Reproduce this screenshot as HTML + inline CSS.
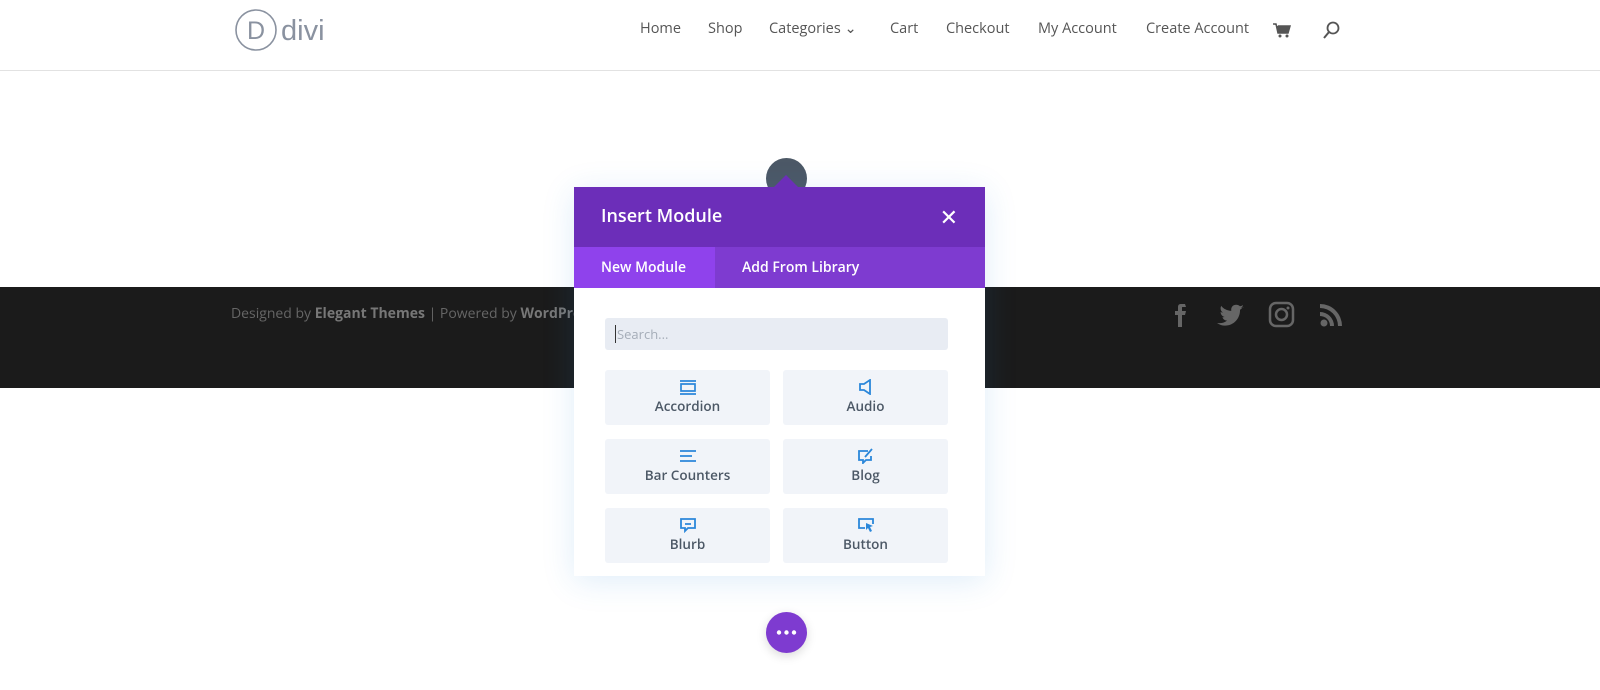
<!DOCTYPE html>
<html><head><meta charset="utf-8"><style>
*{margin:0;padding:0;box-sizing:border-box}
body{width:1600px;height:690px;background:#fff;position:relative;overflow:hidden;font-family:"Open Sans","Liberation Sans",sans-serif}
.hdr{position:absolute;left:0;top:0;width:1600px;height:71px;border-bottom:1px solid #e2e2e2;background:#fff}
.nav{position:absolute;top:19px;font-size:14.5px;color:#555}
.nav span{position:absolute;white-space:nowrap}
.foot{position:absolute;left:0;top:287px;width:1600px;height:101px;background:#1b1b1b}
.ft{position:absolute;left:231px;top:304px;font-size:14px;color:#666;white-space:nowrap}
.ft b{color:#777}
.modal{position:absolute;left:574px;top:187px;width:411px;height:389px;background:#fff;box-shadow:0 5px 30px rgba(43,135,218,.15)}
.mh{height:60px;background:#6c2eb9;color:#fff;font-size:18px;font-weight:600;padding:17px 0 0 27px;position:relative}
.tabs{height:41px;background:#7e3bd0;position:relative;color:#fff;font-size:14px;font-weight:600}
.tabs .a{position:absolute;left:0;top:0;width:141px;height:41px;background:#8f42ec;padding:11px 0 0 27px}
.tabs .b{position:absolute;left:168px;top:11px}
.search{position:absolute;left:31px;top:131px;width:343px;height:32px;background:#e8ecf3;border-radius:3px;font-size:13px;color:#a5adb8;padding:7px 10px}
.btn{position:absolute;width:165px;height:55px;background:#f1f4f9;border-radius:3px;text-align:center;font-size:13.5px;color:#4c5866;font-weight:600}
.btn svg{display:block;margin:9px auto 2px}
</style></head><body>
<div class="hdr">
 <svg style="position:absolute;left:235px;top:8px" width="100" height="46"><circle cx="21" cy="22" r="20" fill="none" stroke="#8a92a0" stroke-width="1.6"/><text x="12" y="31" font-family="Liberation Sans" font-size="25" fill="#8a92a0" font-weight="300">D</text><text x="46" y="32" font-family="Liberation Sans" font-size="29" fill="#8a92a0">divi</text></svg>
 <div class="nav"><span style="left:640px">Home</span><span style="left:708px">Shop</span><span style="left:769px">Categories ⌄</span><span style="left:890px">Cart</span><span style="left:946px">Checkout</span><span style="left:1038px">My Account</span><span style="left:1146px">Create Account</span></div>
 <svg style="position:absolute;left:1273px;top:23px" width="18" height="16"><path d="M0 1h3l2 9h10l2-7H5" fill="#555" stroke="#555" stroke-width="1.5"/><circle cx="7" cy="13" r="1.5" fill="#555"/><circle cx="14" cy="13" r="1.5" fill="#555"/></svg>
 <svg style="position:absolute;left:1323px;top:21px" width="18" height="20"><circle cx="10" cy="7" r="5.5" fill="none" stroke="#555" stroke-width="1.8"/><path d="M6 11L1 17" stroke="#555" stroke-width="2"/></svg>
</div>
<div class="foot"></div>
<div class="ft">Designed by <b>Elegant Themes</b> | Powered by <b>WordPress</b></div>
<svg style="position:absolute;left:1170px;top:300px" width="180" height="30" fill="#666">
 <path d="M15 4h-4c-2 0-3 1-3 3v4H5v4h3v12h4V15h3l1-4h-4V8c0-1 0-1 1-1h3z"/>
 <path d="M74 7c-1 .5-2 .7-3 .8 1-.6 2-1.6 2-2.7-1 .6-2 1-3 1.2-1-1-2.400-1.500-3.800-1.500-3 0-5 2-5 5 0 .4 0 .8.1 1.100-4-.2-8-2-10-5-.5.8-.7 1.600-.7 2.500 0 1.800.9 3.300 2.300 4.200-.8 0-1.600-.3-2.300-.6 0 2.500 1.800 4.500 4.100 5-.8.2-1.600.3-2.300.1.6 2 2.500 3.500 4.700 3.500-2 1.500-4.500 2.500-7.200 2.500H47c2.500 1.500 5 2.500 8 2.500 9.500 0 15-8 15-15v-.7c1-.7 2-1.600 2.700-2.600z"/>
 <rect x="100" y="3" width="23" height="23" rx="6" fill="none" stroke="#666" stroke-width="2.5"/><circle cx="111.5" cy="14.500" r="5.500" fill="none" stroke="#666" stroke-width="2.500"/><circle cx="118" cy="8" r="1.500"/>
 <circle cx="154" cy="23" r="3.500"/><path d="M150 12a14 14 0 0 1 14 14h-4a10 10 0 0 0-10-10z M150 4a22 22 0 0 1 22 22h-4a18 18 0 0 0-18-18z"/>
</svg>
<div style="position:absolute;left:766px;top:158px;width:41px;height:41px;border-radius:50%;background:#4c5866"></div>
<div class="modal">
 <div style="position:absolute;left:199px;top:-12px;width:0;height:0;border-left:13px solid transparent;border-right:13px solid transparent;border-bottom:13px solid #6c2eb9"></div>
 <div class="mh">Insert Module<span style="position:absolute;right:27px;top:15px;font-size:22px;font-weight:400">✕</span></div>
 <div class="tabs"><div class="a">New Module</div><div class="b">Add From Library</div></div>
 <div class="search"><span style="border-left:1px solid #333;padding-left:1px">Search...</span></div>
 <div class="btn" style="left:31px;top:183px"><svg width="18" height="16"><path d="M1 2h16M1 15h16M2 5h14v7H2z" fill="none" stroke="#2b87da" stroke-width="1.7"/></svg>Accordion</div>
 <div class="btn" style="left:209px;top:183px"><svg width="18" height="16"><path d="M3 5h4l6-4v14l-6-4H3z" fill="none" stroke="#2b87da" stroke-width="1.8"/></svg>Audio</div>
 <div class="btn" style="left:31px;top:252px"><svg width="18" height="16"><path d="M1 3h16M1 8h12M1 13h16" stroke="#2b87da" stroke-width="1.7"/></svg>Bar Counters</div>
 <div class="btn" style="left:209px;top:252px"><svg width="18" height="16"><path d="M11 3H2v9h4v3l3-3h5V8M8 9l7-8" fill="none" stroke="#2b87da" stroke-width="1.8"/></svg>Blog</div>
 <div class="btn" style="left:31px;top:321px"><svg width="18" height="16"><path d="M2 2h14v9h-7l-3 3v-3H2z M6 7h6" fill="none" stroke="#2b87da" stroke-width="1.8"/></svg>Blurb</div>
 <div class="btn" style="left:209px;top:321px"><svg width="18" height="16"><path d="M8 11H2V2h14v5" fill="none" stroke="#2b87da" stroke-width="1.8"/><path d="M9 6l7 3-3 1 2 4-2 1-2-4-2 2z" fill="#2b87da"/></svg>Button</div>
</div>
<div style="position:absolute;left:766px;top:612px;width:41px;height:41px;border-radius:50%;background:#7e3bd0;box-shadow:0 3px 10px rgba(0,0,0,.15)">
 <svg width="41" height="41"><circle cx="13" cy="20.5" r="2.2" fill="#fff"/><circle cx="20.5" cy="20.5" r="2.2" fill="#fff"/><circle cx="28" cy="20.5" r="2.2" fill="#fff"/></svg>
</div>
</body></html>
